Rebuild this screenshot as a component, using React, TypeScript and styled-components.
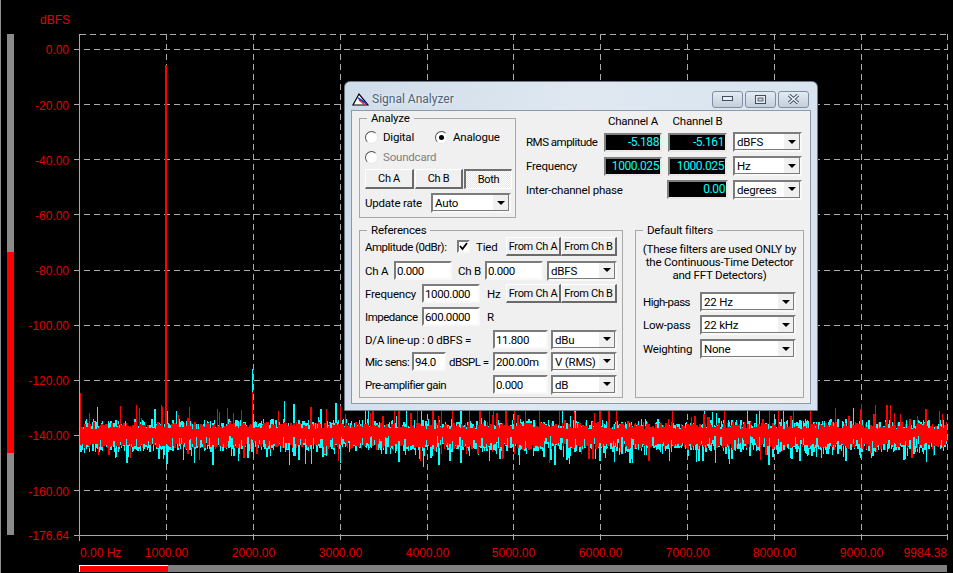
import styled, { createGlobalStyle } from 'styled-components';

const GlobalStyle = createGlobalStyle`
  html, body {
    margin: 0;
    padding: 0;
    background: #000;
    overflow: hidden;
  }
`;

const LEVELS = [
  { y: 49, label: '0.00' },
  { y: 104.5, label: '-20.00' },
  { y: 159.5, label: '-40.00' },
  { y: 214.5, label: '-60.00' },
  { y: 270, label: '-80.00' },
  { y: 325, label: '-100.00' },
  { y: 380, label: '-120.00' },
  { y: 435, label: '-140.00' },
  { y: 490.5, label: '-160.00' },
];

const FREQS = [1000, 2000, 3000, 4000, 5000, 6000, 7000, 8000, 9000];
const freqX = (f: number) => Math.round(78.9 + f * 0.08691) + 0.5;

function makeNoise(seed: number, up: number, down: number, spikeUp: number, spikeDown: number, gaps: number) {
  let s = seed;
  const rand = () => {
    s = (s + 0x6d2b79f5) | 0;
    let t = Math.imul(s ^ (s >>> 15), 1 | s);
    t = (t + Math.imul(t ^ (t >>> 7), 61 | t)) ^ t;
    return ((t ^ (t >>> 14)) >>> 0) / 4294967296;
  };
  let d = '';
  let x = 80;
  while (x < 947) {
    // the trace holds a value for a pixel or two, which gives the blocky edge
    const run = rand() < 0.35 ? 2 : 1;
    let top = 429 - rand() * up;
    let bottom = 443 + rand() * down;
    if (rand() < spikeUp) top -= rand() * 22;
    if (rand() < spikeDown) bottom += rand() * 15;
    if (rand() < gaps) bottom = 436 + rand() * 6;
    for (let i = 0; i < run && x < 947; i++, x++) {
      d += `M${x + 0.5} ${Math.round(top)}V${Math.round(bottom)}`;
    }
  }
  return d;
}

const cyanNoise = makeNoise(7, 10, 9, 0.06, 0.28, 0);
const redNoise = makeNoise(21, 7, 6, 0.13, 0.1, 0.2);

function Spectrum() {
  return (
    <ChartSvg viewBox="14 0 939 563">
      {LEVELS.map((l) => (
        <g key={l.label}>
          <GridLine x1={74} x2={947} y1={Math.floor(l.y) + 0.5} y2={Math.floor(l.y) + 0.5} />
          <AxisLabel x={69} y={l.y + 5} textAnchor="end">{l.label}</AxisLabel>
        </g>
      ))}
      <GridLine x1={80} x2={947} y1={34.5} y2={34.5} />
      {FREQS.map((f) => (
        <g key={f}>
          <GridLine x1={freqX(f)} x2={freqX(f)} y1={34} y2={541} />
          <AxisLabel x={freqX(f)} y={557} textAnchor="middle">{f}.00</AxisLabel>
        </g>
      ))}
      <GridLine x1={947.5} x2={947.5} y1={34} y2={541} />
      <SolidLine x1={79.5} x2={79.5} y1={34} y2={541} />
      <SolidLine x1={74} x2={947} y1={535.5} y2={535.5} />
      <path d={cyanNoise} stroke="#00ffff" shapeRendering="crispEdges" fill="none" />
      <path d="M252.5 369V440" stroke="#00ffff" shapeRendering="crispEdges" />
      <path d={redNoise} stroke="#ff0000" shapeRendering="crispEdges" fill="none" />
      <path d="M80.5 393V440" stroke="#ff0000" shapeRendering="crispEdges" />
      <path d="M252.5 392V440" stroke="#ff0000" shapeRendering="crispEdges" />
      <path d="M166 65V436" stroke="#ff0000" strokeWidth={2} shapeRendering="crispEdges" />
      <AxisLabel x={40} y={24}>dBFS</AxisLabel>
      <AxisLabel x={69} y={540} textAnchor="end">-176.64</AxisLabel>
      <AxisLabel x={80} y={557}>0.00 Hz</AxisLabel>
      <AxisLabel x={947} y={557} textAnchor="end">9984.38</AxisLabel>
    </ChartSvg>
  );
}

function Dropdown({ value, w, ml }: { value: string; w: number; ml?: number }) {
  return (
    <SelectBox $w={w} $ml={ml}>
      <SelectValue>{value}</SelectValue>
      <SelectArrow>
        <svg width="8" height="4" viewBox="0 0 8 4"><path d="M0 0h8L4 4z" fill="#000" /></svg>
      </SelectArrow>
    </SelectBox>
  );
}

function Radio({ label, checked, disabled, w }: { label: string; checked?: boolean; disabled?: boolean; w?: number }) {
  return (
    <RadioItem $w={w} $disabled={disabled}>
      <RadioMark>{checked && <RadioDot />}</RadioMark>
      {label}
    </RadioItem>
  );
}

function CaptionGlyph({ kind }: { kind: 'min' | 'max' | 'close' }) {
  if (kind === 'min') {
    return (
      <svg width="11" height="6" viewBox="0 0 11 6">
        <rect x="0.5" y="0.5" width="10" height="4" fill="#e8edf3" stroke="#3f4f60" />
      </svg>
    );
  }
  if (kind === 'max') {
    return (
      <svg width="11" height="9" viewBox="0 0 11 9">
        <rect x="0.5" y="0.5" width="10" height="8" fill="#e8edf3" stroke="#3f4f60" />
        <rect x="3" y="3" width="5" height="3" fill="#c4d0dd" stroke="#3f4f60" strokeWidth="0.8" />
      </svg>
    );
  }
  return (
    <svg width="13" height="10" viewBox="0 0 13 10">
      <path d="M2 1l9 8M11 1L2 9" stroke="#3f4f60" strokeWidth="3.4" />
      <path d="M2 1l9 8M11 1L2 9" stroke="#f2f5f8" strokeWidth="1.6" />
    </svg>
  );
}

export default function App() {
  return (
    <>
      <GlobalStyle />
      <Screen>
        <LevelRail>
          <LevelTrack>
            <LevelFill />
          </LevelTrack>
        </LevelRail>
        <ChartColumn>
          <Spectrum />
          <ScrollTrack>
            <ScrollThumb />
          </ScrollTrack>
        </ChartColumn>

        <Dialog>
          <TitleBar>
            <svg width="17" height="13" viewBox="0 0 17 13">
              <path d="M7 1L1 12h15z" fill="#fff" stroke="#000" strokeWidth="1.2" />
              <path d="M6 5l9 6" stroke="#2030d0" strokeWidth="1.6" />
              <path d="M7 7l6 5" stroke="#e02020" strokeWidth="1.2" />
            </svg>
            <TitleText>Signal Analyzer</TitleText>
            <CaptionButtons>
              <CaptionButton><CaptionGlyph kind="min" /></CaptionButton>
              <CaptionButton><CaptionGlyph kind="max" /></CaptionButton>
              <CaptionButton><CaptionGlyph kind="close" /></CaptionButton>
            </CaptionButtons>
          </TitleBar>

          <Client>
            <TopRow>
              <Group $w={157} $h={100}>
                <GroupTitle>Analyze</GroupTitle>
                <Row $h={14} $mt={10}>
                  <Radio label="Digital" w={70} />
                  <Radio label="Analogue" checked />
                </Row>
                <Row $h={14} $mt={6}>
                  <Radio label="Soundcard" disabled />
                </Row>
                <Row $h={20} $mt={5} $gap={1}>
                  <PushButton $w={49} $h={20}>Ch A</PushButton>
                  <PushButton $w={48} $h={20}>Ch B</PushButton>
                  <PushButton $w={48} $h={20} $pressed>Both</PushButton>
                </Row>
                <Row $h={20} $mt={4}>
                  <Label $w={66}>Update rate</Label>
                  <Dropdown value="Auto" w={80} />
                </Row>
              </Group>

              <Readouts>
                <span />
                <ChannelHead>Channel A</ChannelHead>
                <ChannelHead>Channel B</ChannelHead>
                <span />

                <Label $tight>RMS amplitude</Label>
                <Display>-5.188</Display>
                <Display>-5.161</Display>
                <Dropdown value="dBFS" w={69} />

                <Label>Frequency</Label>
                <Display>1000.025</Display>
                <Display>1000.025</Display>
                <Dropdown value="Hz" w={69} />

                <PhaseLabel>Inter-channel phase</PhaseLabel>
                <PhaseDisplay>0.00</PhaseDisplay>
                <Dropdown value="degrees" w={69} />
              </Readouts>
            </TopRow>

            <BottomRow>
              <Group $w={264} $h={168}>
                <GroupTitle>References</GroupTitle>
                <RowStack>
                  <Row $h={19}>
                    <Label $w={92} $tight>Amplitude (0dBr):</Label>
                    <CheckBox>
                      <svg width="9" height="9" viewBox="0 0 9 9"><path d="M1 4l2.5 3L8 1" fill="none" stroke="#000" strokeWidth="1.8" /></svg>
                    </CheckBox>
                    <Label $w={36} $pl={6}>Tied</Label>
                    <PushButton $w={55}>From Ch A</PushButton>
                    <PushButton $w={56}>From Ch B</PushButton>
                  </Row>
                  <Row $h={19} $mt={1}>
                    <Label $w={29}>Ch A</Label>
                    <Field $w={58} readOnly value="0.000" />
                    <Label $w={33} $pl={6}>Ch B</Label>
                    <Field $w={58} readOnly value="0.000" />
                    <Dropdown value="dBFS" w={70} ml={4} />
                  </Row>
                  <Row $h={19}>
                    <Label $w={57}>Frequency</Label>
                    <Field $w={58} readOnly value="1000.000" />
                    <Label $w={26} $pl={7}>Hz</Label>
                    <PushButton $w={55}>From Ch A</PushButton>
                    <PushButton $w={56}>From Ch B</PushButton>
                  </Row>
                  <Row $h={19}>
                    <Label $w={57} $tight>Impedance</Label>
                    <Field $w={58} readOnly value="600.0000" />
                    <Label $w={26} $pl={7}>R</Label>
                  </Row>
                  <Row $h={19}>
                    <Label $w={128}>D/A line-up : 0 dBFS =</Label>
                    <Field $w={55} readOnly value="11.800" />
                    <Dropdown value="dBu" w={66} ml={3} />
                  </Row>
                  <Row $h={19} $mt={-1}>
                    <Label $w={47} $tight>Mic sens:</Label>
                    <Field $w={34} readOnly value="94.0" />
                    <Label $w={47} $pl={3} $tight>dBSPL =</Label>
                    <Field $w={55} readOnly value="200.00m" />
                    <Dropdown value="V (RMS)" w={66} ml={3} />
                  </Row>
                  <Row $h={19}>
                    <Label $w={128} $tight>Pre-amplifier gain</Label>
                    <Field $w={55} readOnly value="0.000" />
                    <Dropdown value="dB" w={66} ml={3} />
                  </Row>
                </RowStack>
              </Group>

              <Group $w={169} $h={168}>
                <GroupTitle>Default filters</GroupTitle>
                <FilterNote>
                  (These filters are used ONLY by
                  <br />
                  the Continuous-Time Detector
                  <br />
                  and FFT Detectors)
                </FilterNote>
                <FilterRows>
                  <Row $h={20}>
                    <Label $w={57} $tight>High-pass</Label>
                    <Dropdown value="22 Hz" w={96} />
                  </Row>
                  <Row $h={20} $mt={-1}>
                    <Label $w={57}>Low-pass</Label>
                    <Dropdown value="22 kHz" w={96} />
                  </Row>
                  <Row $h={20}>
                    <Label $w={57}>Weighting</Label>
                    <Dropdown value="None" w={96} />
                  </Row>
                </FilterRows>
              </Group>
            </BottomRow>
          </Client>
        </Dialog>
      </Screen>
    </>
  );
}

const Screen = styled.div`
  position: relative;
  display: flex;
  width: 953px;
  height: 573px;
  background: #000;
  overflow: hidden;
  font-family: 'Roboto', 'Liberation Sans', sans-serif;
  font-size: 11.5px;
  letter-spacing: -0.2px;
  color: #000;
`;

const LevelRail = styled.div`
  box-sizing: border-box;
  width: 14px;
  height: 573px;
  padding: 34px 0 0 6px;
  border-left: 1px solid #909090;
`;

const LevelTrack = styled.div`
  width: 7px;
  height: 501px;
  background: #8a8a8a;
`;

const LevelFill = styled.div`
  position: relative;
  top: 218px;
  height: 201px;
  background: #ff0000;
`;

const ChartColumn = styled.div`
  display: flex;
  flex-direction: column;
  width: 939px;
`;

const ChartSvg = styled.svg`
  display: block;
  width: 939px;
  height: 563px;
`;

const GridLine = styled.line`
  stroke: #aaaaaa;
  stroke-dasharray: 6 4;
  shape-rendering: crispEdges;
`;

const SolidLine = styled.line`
  stroke: #aaaaaa;
  shape-rendering: crispEdges;
`;

const AxisLabel = styled.text`
  fill: #e00000;
  font-family: 'Liberation Sans', Arial, sans-serif;
  font-size: 12px;
  letter-spacing: 0;
`;

const ScrollTrack = styled.div`
  width: 868px;
  height: 7px;
  margin: 2px 0 0 65px;
  background: #808080;
`;

const ScrollThumb = styled.div`
  box-sizing: border-box;
  width: 89px;
  height: 7px;
  background: #ff0000;
  border-top: 1px solid #fff;
  border-left: 1px solid #fff;
`;

const Dialog = styled.div`
  position: absolute;
  left: 344px;
  top: 81px;
  box-sizing: border-box;
  width: 474px;
  height: 330px;
  padding: 0 7px 7px;
  display: flex;
  flex-direction: column;
  border: 1px solid #6d7c8c;
  border-radius: 6px 6px 0 0;
  background: linear-gradient(100deg, #cfdcea 0%, #dfe8f1 45%, #d6e2ef 100%);
`;

const TitleBar = styled.div`
  display: flex;
  align-items: center;
  height: 29px;
  padding-top: 5px;
  box-sizing: border-box;
`;

const TitleText = styled.span`
  margin-left: 3px;
  font-size: 12px;
  letter-spacing: 0;
  color: #4d6378;
  text-shadow: 0 0 4px #fff;
`;

const CaptionButtons = styled.div`
  display: flex;
  gap: 2px;
  margin: 0 1px 0 auto;
`;

const CaptionButton = styled.div`
  box-sizing: border-box;
  width: 31px;
  height: 17px;
  display: flex;
  align-items: center;
  justify-content: center;
  border: 1px solid #7f8fa0;
  border-radius: 3px;
  background: linear-gradient(#e4ebf2, #c3cfdc);
`;

const Client = styled.div`
  flex: 1;
  display: flex;
  flex-direction: column;
  gap: 12px;
  padding: 7px 6px 5px 7px;
  background: #f0f0f0;
  box-shadow: 0 0 0 1px #8c99a6;
`;

const TopRow = styled.div`
  display: flex;
  gap: 10px;
`;

const BottomRow = styled.div`
  display: flex;
  gap: 12px;
`;

const Group = styled.div<{ $w: number; $h: number }>`
  position: relative;
  box-sizing: border-box;
  width: ${(p) => p.$w}px;
  height: ${(p) => p.$h}px;
  padding: 1px 5px;
  border: 1px solid #a8a8a8;
`;

const GroupTitle = styled.span`
  position: absolute;
  left: 7px;
  top: -8px;
  padding: 0 4px;
  line-height: 14px;
  background: #f0f0f0;
`;

const Row = styled.div<{ $h: number; $mt?: number; $gap?: number }>`
  display: flex;
  align-items: center;
  height: ${(p) => p.$h}px;
  margin-top: ${(p) => p.$mt ?? 0}px;
  gap: ${(p) => p.$gap ?? 0}px;
`;

const RowStack = styled.div`
  display: flex;
  flex-direction: column;
  gap: 4px;
  margin-top: 5px;
`;

const Label = styled.span<{ $w?: number; $pl?: number; $tight?: boolean }>`
  box-sizing: border-box;
  flex: none;
  width: ${(p) => (p.$w ? `${p.$w}px` : 'auto')};
  padding-left: ${(p) => p.$pl ?? 0}px;
  letter-spacing: ${(p) => (p.$tight ? '-0.5px' : 'inherit')};
  white-space: nowrap;
`;

const RadioItem = styled.label<{ $w?: number; $disabled?: boolean }>`
  display: flex;
  align-items: center;
  gap: 5px;
  width: ${(p) => (p.$w ? `${p.$w}px` : 'auto')};
  color: ${(p) => (p.$disabled ? '#808080' : '#000')};
`;

const RadioMark = styled.span`
  box-sizing: border-box;
  display: flex;
  align-items: center;
  justify-content: center;
  width: 13px;
  height: 13px;
  border: 1px solid;
  border-color: #505050 #e8e8e8 #e8e8e8 #505050;
  border-radius: 50%;
  background: #fff;
`;

const RadioDot = styled.span`
  width: 5px;
  height: 5px;
  border-radius: 50%;
  background: #000;
`;

const PushButton = styled.div<{ $w: number; $h?: number; $pressed?: boolean }>`
  box-sizing: border-box;
  flex: none;
  width: ${(p) => p.$w}px;
  height: ${(p) => p.$h ?? 19}px;
  display: flex;
  align-items: center;
  justify-content: center;
  font-size: 11px;
  letter-spacing: -0.3px;
  white-space: nowrap;
  border: 1px solid;
  border-color: ${(p) => (p.$pressed ? '#707070 #fff #fff #707070' : '#fff #6a6a6a #6a6a6a #fff')};
  border-width: ${(p) => (p.$pressed ? '2px 1px 1px 2px' : '1px 2px 2px 1px')};
  background: ${(p) =>
    p.$pressed ? 'repeating-conic-gradient(#fff 0 25%, #e6e6e6 0 50%) 0 0 / 2px 2px' : '#f0f0f0'};
`;

const SelectBox = styled.div<{ $w: number; $ml?: number }>`
  box-sizing: border-box;
  flex: none;
  display: flex;
  width: ${(p) => p.$w}px;
  height: 20px;
  margin-left: ${(p) => p.$ml ?? 0}px;
  background: #fff;
  border: 2px solid;
  border-color: #7c7c7c #f8f8f8 #f8f8f8 #7c7c7c;
  box-shadow: inset -1px -1px 0 #7c7c7c;
`;

const SelectValue = styled.span`
  flex: 1;
  padding-left: 2px;
  line-height: 16px;
  white-space: nowrap;
`;

const SelectArrow = styled.span`
  box-sizing: border-box;
  width: 16px;
  display: flex;
  align-items: center;
  justify-content: center;
  background: #f0f0f0;
  border-right: 1px solid #7c7c7c;
  border-bottom: 1px solid #7c7c7c;
`;

const Field = styled.input<{ $w: number }>`
  box-sizing: border-box;
  flex: none;
  width: ${(p) => p.$w}px;
  height: 19px;
  padding: 0 1px;
  margin: 0;
  outline: none;
  font: inherit;
  letter-spacing: -0.4px;
  background: #fff;
  border: 2px solid;
  border-color: #7c7c7c #f8f8f8 #f8f8f8 #7c7c7c;
`;

const CheckBox = styled.span`
  box-sizing: border-box;
  flex: none;
  width: 13px;
  height: 13px;
  display: flex;
  align-items: center;
  justify-content: center;
  background: #fff;
  border: 2px solid;
  border-color: #7c7c7c #f8f8f8 #f8f8f8 #7c7c7c;
`;

const Readouts = styled.div`
  display: grid;
  grid-template-columns: 72px 58px 59px 69px;
  grid-template-rows: 10px 20px 20px 19px;
  column-gap: 6px;
  row-gap: 4px;
  align-items: center;
  align-content: start;
`;

const ChannelHead = styled.span`
  margin-top: -4px;
  text-align: center;
  white-space: nowrap;
`;

const Display = styled.div`
  box-sizing: border-box;
  height: 19px;
  padding-right: 1px;
  text-align: right;
  line-height: 15px;
  font-size: 12px;
  letter-spacing: -0.4px;
  color: #00ffff;
  background: #000;
  border: 2px solid;
  border-color: #808080 #e8e8e8 #e8e8e8 #808080;
`;

const PhaseLabel = styled(Label)`
  grid-column: 1 / span 2;
`;

const PhaseDisplay = styled(Display)`
  margin-left: -1px;
  margin-right: -1px;
`;

const FilterNote = styled.div`
  margin-top: 11px;
  line-height: 13px;
  text-align: center;
  white-space: nowrap;
`;

const FilterRows = styled.div`
  display: flex;
  flex-direction: column;
  gap: 4px;
  margin: 10px 0 0 2px;
`;
